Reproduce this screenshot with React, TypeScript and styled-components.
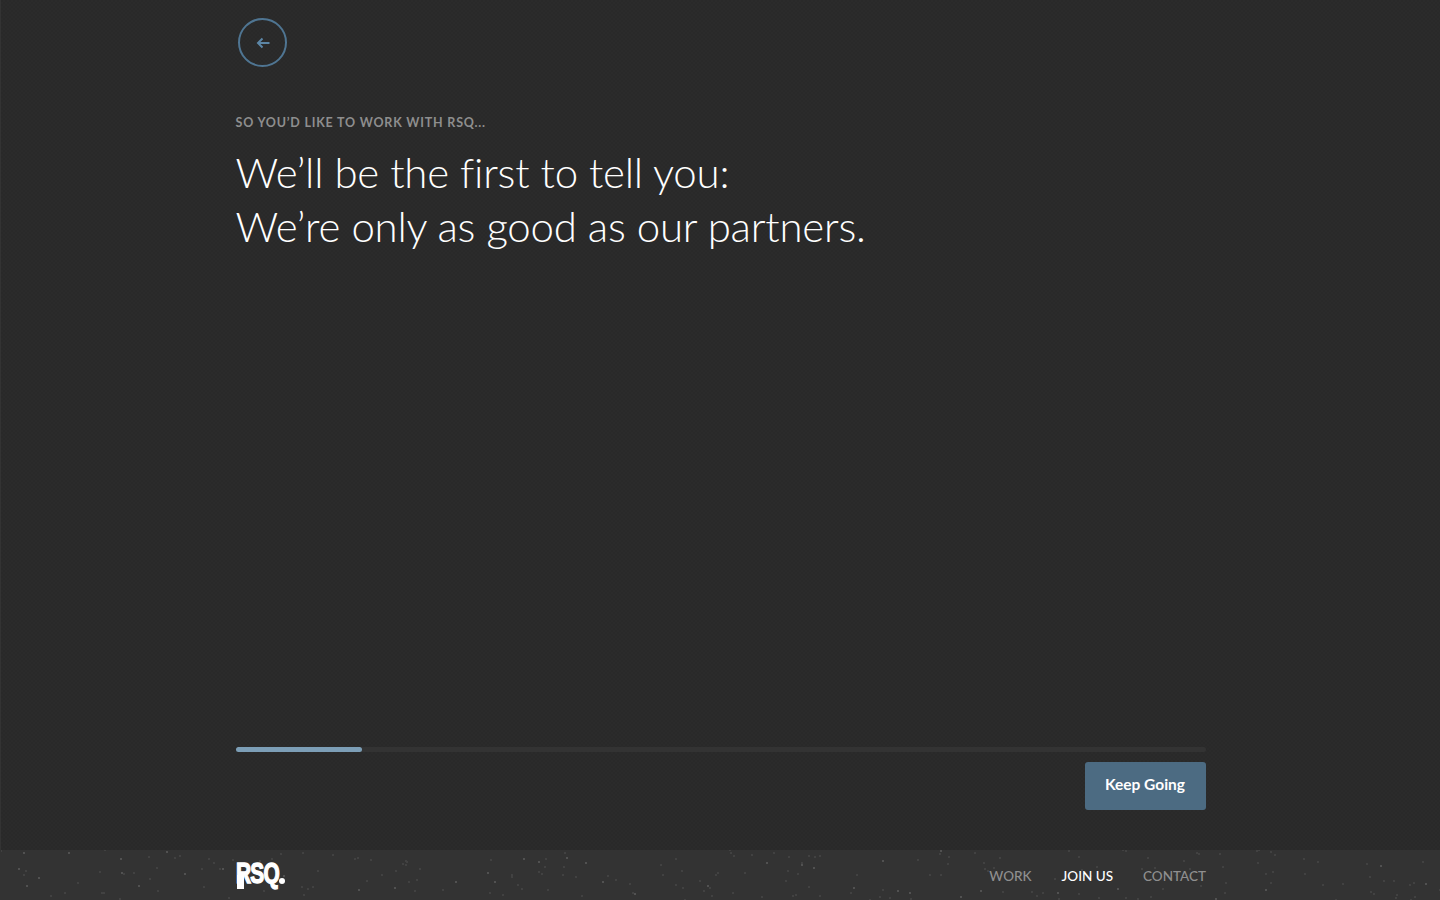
import React from 'react'
import styled, { createGlobalStyle } from 'styled-components'

const GlobalStyle = createGlobalStyle`
  html, body {
    margin: 0;
    padding: 0;
    background: #2a2a2a;
  }
  body {
    font-family: Lato, "Noto Sans", sans-serif;
  }
`

// seeded so the footer grain comes out the same on every load
const speckles = (count: number) => {
  let seed = 11
  const next = () => {
    seed = (seed * 16807) % 2147483647
    return seed / 2147483647
  }
  const layers: string[] = []
  for (let i = 0; i < count; i++) {
    const x = Math.round(next() * 1440)
    const y = Math.round(next() * 50)
    const tone = next() > 0.8 ? '#525252' : '#424242'
    layers.push(`radial-gradient(circle at ${x}px ${y}px, ${tone} 0.7px, transparent 1px)`)
  }
  return layers.join(', ')
}

const Page = styled.div`
  box-sizing: border-box;
  display: flex;
  flex-direction: column;
  height: 900px;
  overflow: hidden;
  border-left: 1px solid #333333;
  background: repeating-conic-gradient(#2b2b2b 0 25%, #292929 0 50%) 0 0 / 4px 4px;
`

const Main = styled.main`
  box-sizing: border-box;
  display: flex;
  flex-direction: column;
  flex: 1;
  width: 970px;
  margin: 0 auto;
  padding: 18px 0 40px;
`

const BackButton = styled.button`
  box-sizing: border-box;
  display: flex;
  align-items: center;
  justify-content: center;
  width: 49px;
  height: 49px;
  margin-left: 2px;
  padding: 0 0 0 1px;
  border: 2px solid #4f7592;
  border-radius: 50%;
  background: transparent;
  color: #5c86a6;
`

const Eyebrow = styled.div`
  margin-top: 48px;
  font-size: 12.5px;
  font-weight: 700;
  line-height: 16px;
  letter-spacing: 0.8px;
  color: #8e8e8e;
  text-transform: uppercase;
`

const Heading = styled.h1`
  margin: 14px 0 0;
  font-size: 42px;
  font-weight: 300;
  line-height: 54px;
  letter-spacing: -0.23px;
  color: #ffffff;
`

const Actions = styled.div`
  display: flex;
  flex-direction: column;
  align-items: flex-end;
  gap: 10px;
  margin-top: auto;
`

const Track = styled.div`
  align-self: stretch;
  height: 5px;
  border-radius: 3px;
  background: #333333;
`

const Fill = styled.div`
  height: 100%;
  border-radius: 3px;
  background: #7c9eb6;
`

const KeepGoing = styled.button`
  width: 121px;
  height: 48px;
  padding: 0 0 4px;
  border: 0;
  border-radius: 3px;
  background: #4c6b82;
  color: #ffffff;
  font-family: Lato, sans-serif;
  font-size: 15.5px;
  font-weight: 700;
`

const Footer = styled.footer`
  flex: none;
  height: 50px;
  margin-left: -1px;
  background-color: #333333;
`

const FooterInner = styled.div`
  display: flex;
  align-items: center;
  justify-content: space-between;
  width: 970px;
  height: 100%;
  margin: 0 auto;
`

const Logo = styled.div`
  position: relative;
  display: flex;
  align-items: flex-start;
  width: 50px;
  height: 26px;
  margin: 1px 0 0 1px;
  color: #ffffff;
  font-family: "Liberation Sans", Arial, sans-serif;
  font-size: 29px;
  font-weight: 700;
  line-height: 21px;
`

const LogoWord = styled.span`
  display: block;
  transform: scaleX(0.72);
  transform-origin: left top;
  letter-spacing: -1px;
  white-space: nowrap;
  -webkit-text-stroke: 1.4px #ffffff;
`

const LogoStem = styled.i`
  position: absolute;
  left: 1px;
  top: 12px;
  width: 7px;
  height: 14px;
  background: #ffffff;
`

const LogoDot = styled.i`
  position: absolute;
  right: 1px;
  top: 15px;
  width: 6px;
  height: 6px;
  border-radius: 50%;
  background: #ffffff;
`

const Nav = styled.nav`
  display: flex;
  gap: 30px;
  margin-right: -1px;
  padding-top: 2px;
`

const NavLink = styled.a<{ $active?: boolean }>`
  font-size: 13.5px;
  font-weight: 500;
  color: ${props => (props.$active ? '#ffffff' : '#8f8f8f')};
  text-transform: uppercase;
`

const App: React.FC = () => {
  const grain = React.useMemo(() => speckles(230), [])

  return (
    <>
      <GlobalStyle />
      <Page>
        <Main>
          <BackButton aria-label="Back">
            <svg width="14" height="12" viewBox="0 0 14 12" fill="none" stroke="currentColor" strokeWidth="2">
              <path d="M13.5 6H2" />
              <path d="M6.5 1.5L2 6l4.5 4.5" />
            </svg>
          </BackButton>
          <Eyebrow>So you’d like to work with RSQ...</Eyebrow>
          <Heading>
            We’ll be the first to tell you:
            <br />
            We’re only as good as our partners.
          </Heading>
          <Actions>
            <Track>
              <Fill style={{ width: '13%' }} />
            </Track>
            <KeepGoing>Keep Going</KeepGoing>
          </Actions>
        </Main>
        <Footer style={{ backgroundImage: grain }}>
          <FooterInner>
            <Logo>
              <LogoWord>RSQ</LogoWord>
              <LogoStem />
              <LogoDot />
            </Logo>
            <Nav>
              <NavLink>Work</NavLink>
              <NavLink $active>Join Us</NavLink>
              <NavLink>Contact</NavLink>
            </Nav>
          </FooterInner>
        </Footer>
      </Page>
    </>
  )
}

export default App
